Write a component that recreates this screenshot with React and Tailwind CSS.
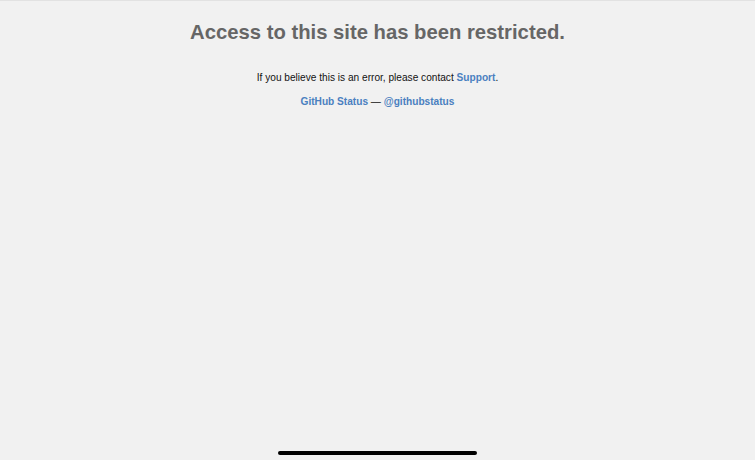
import React from 'react';

export default function App() {
  return (
    <div className="relative w-[755px] h-[460px] overflow-hidden bg-[#f1f1f1] border-t border-[#e2e2e2] font-['Liberation_Sans',Arial,sans-serif]">
      <div className="flex flex-col items-center pt-[18px] text-center">
        <h1 className="text-[20.25px] leading-[26px] font-bold text-[#666666]">
          Access to this site has been restricted.
        </h1>
        <p className="mt-[26px] text-[10.15px] leading-[14px] text-[#111111]">
          If you believe this is an error, please contact{' '}
          <a className="font-bold text-[#4a80c0]">Support</a>.
        </p>
        <p className="mt-[10px] text-[10.15px] leading-[14px] font-bold text-[#4a80c0]">
          <a>GitHub Status</a>
          <span className="text-[#111111] font-normal"> — </span>
          <a>@githubstatus</a>
        </p>
      </div>
      <div className="absolute left-[278px] bottom-[5px] w-[199px] h-[4px] rounded-full bg-black" />
    </div>
  );
}
